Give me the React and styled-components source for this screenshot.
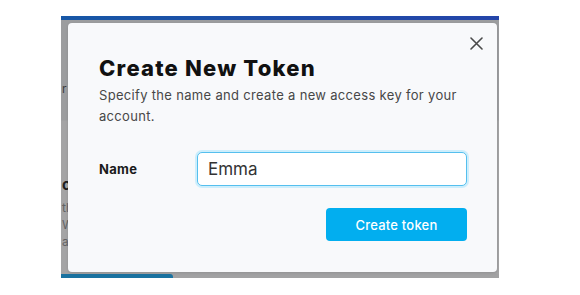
import React from "react";
import styled, { createGlobalStyle } from "styled-components";

const Global = createGlobalStyle`
  html, body { margin: 0; padding: 0; background: #ffffff; }
  body { font-family: Inter, "Open Sans", sans-serif; }
  * { box-sizing: border-box; }
`;

const Screen = styled.div`
  width: 438px;
  height: 262px;
  margin: 16px 0 0 61px;
  display: flex;
  flex-direction: column;
`;

const TopBar = styled.div`
  height: 4px;
  background: linear-gradient(90deg, #1757a6 0%, #1f4aa8 60%, #2445a9 100%);
`;

const Dimmed = styled.div`
  flex: 1;
  display: flex;
  background: linear-gradient(180deg, #9c9d9f 0px, #9c9d9f 100px, #a4a4a5 101px, #a4a4a5 100%);
  padding: 3px 2px 2px 0;
`;

const Peek = styled.div`
  width: 7px;
  overflow: hidden;
  display: flex;
  flex-direction: column;
  font-family: Inter, sans-serif;
  white-space: nowrap;
`;

const PeekLine = styled.div`
  font-size: ${(p) => p.$size || 12}px;
  font-weight: ${(p) => (p.$bold ? 700 : 400)};
  color: ${(p) => p.$color || "#5a5a5c"};
  margin-top: ${(p) => p.$gap || 0}px;
  line-height: ${(p) => p.$lh || 16}px;
  padding-left: 1px;
`;

const Modal = styled.div`
  position: relative;
  flex: 1;
  background: #f8f9fb;
  border-radius: 4px;
  box-shadow: 0 1px 3px rgba(0, 0, 0, 0.12);
  padding: 30px 30px 0 31px;
  display: flex;
  flex-direction: column;
`;

const Close = styled.button`
  position: absolute;
  top: 12px;
  right: 13px;
  width: 16px;
  height: 16px;
  padding: 0;
  border: 0;
  background: transparent;
  display: flex;
  align-items: center;
  justify-content: center;
  cursor: pointer;
`;

const Title = styled.h2`
  margin: 0;
  font-size: 22px;
  line-height: 30px;
  font-weight: 800;
  color: #111111;
  letter-spacing: 1.2px;
`;

const Subtitle = styled.p`
  margin: 2px 0 0;
  font-size: 13px;
  line-height: 21px;
  color: #474747;
  letter-spacing: 0.32px;
`;

const FormRow = styled.div`
  display: flex;
  align-items: center;
  margin-top: 25px;
`;

const Label = styled.label`
  width: 98px;
  font-size: 13px;
  font-weight: 700;
  color: #1b1b1b;
  letter-spacing: 0.3px;
`;

const Input = styled.input`
  width: 270px;
  height: 34px;
  border: 1px solid #55bfee;
  border-radius: 5px;
  background: #ffffff;
  box-shadow: 0 0 0 2px #cdeefc;
  padding: 0 10px;
  font-family: inherit;
  font-size: 17px;
  color: #333333;
  outline: none;
`;

const Actions = styled.div`
  display: flex;
  justify-content: flex-end;
  margin-top: 22px;
`;

const Button = styled.button`
  width: 141px;
  height: 33px;
  border: 0;
  border-radius: 4px;
  background: #02aeef;
  color: #ffffff;
  font-family: inherit;
  font-size: 13px;
  font-weight: 500;
  letter-spacing: 0.2px;
  cursor: pointer;
`;

const BottomStrip = styled.div`
  height: 4px;
  display: flex;
  background: #a2a2a3;
`;

const BottomTab = styled.div`
  width: 112px;
  background: #1a72a0;
  border-top-right-radius: 3px;
`;

export default function App() {
  return (
    <>
      <Global />
      <Screen>
        <TopBar />
        <Dimmed>
          <Peek>
            <PeekLine $gap={58} $color="#3c3c3d">r</PeekLine>
            <PeekLine $gap={80} $size={15} $bold $color="#1e1e1f">co</PeekLine>
            <PeekLine $gap={6} $color="#626264" $lh={17}>the</PeekLine>
            <PeekLine $color="#626264" $lh={17}>We</PeekLine>
            <PeekLine $color="#626264" $lh={17}>are</PeekLine>
          </Peek>
          <Modal>
            <Close aria-label="Close">
              <svg width="13" height="13" viewBox="0 0 13 13">
                <path d="M1 1L12 12M12 1L1 12" stroke="#4a4a4a" strokeWidth="1.6" strokeLinecap="round" />
              </svg>
            </Close>
            <Title>Create New Token</Title>
            <Subtitle>
              Specify the name and create a new access key for your account.
            </Subtitle>
            <FormRow>
              <Label>Name</Label>
              <Input defaultValue="Emma" />
            </FormRow>
            <Actions>
              <Button>Create token</Button>
            </Actions>
          </Modal>
        </Dimmed>
        <BottomStrip>
          <BottomTab />
        </BottomStrip>
      </Screen>
    </>
  );
}
